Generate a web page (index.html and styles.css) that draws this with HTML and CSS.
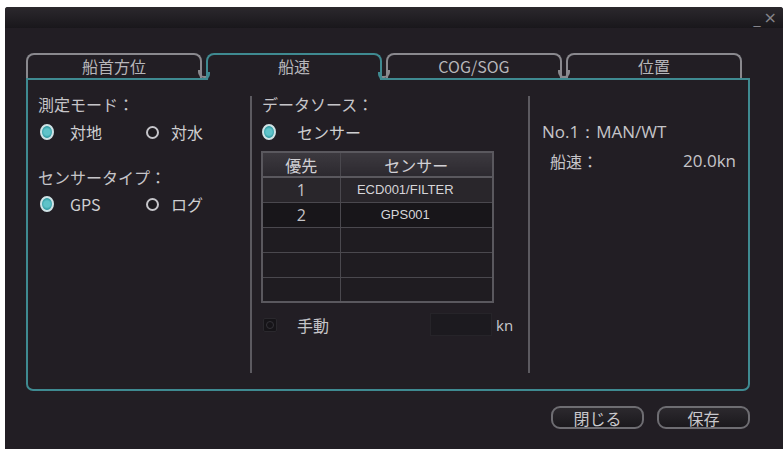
FILE: index.html
```html
<!DOCTYPE html>
<html lang="ja">
<head>
<meta charset="utf-8">
<title>船速</title>
<link rel="stylesheet" href="styles.css">
</head>
<body>
<div class="window">
  <div class="titlebar"><span class="ctl min">_</span><span class="ctl close">×</span></div>
  <div class="main">
    <div class="tabs">
      <div class="tab">船首方位</div>
      <div class="tab active">船速</div>
      <div class="tab">COG/SOG</div>
      <div class="tab">位置</div>
    </div>
    <div class="panel">
      <div class="col col-mode">
        <div class="label">測定モード：</div>
        <div class="radios">
          <div class="radio on"><span class="dot"></span><span>対地</span></div>
          <div class="radio"><span class="dot"></span><span>対水</span></div>
        </div>
        <div class="label second">センサータイプ：</div>
        <div class="radios">
          <div class="radio on"><span class="dot"></span><span>GPS</span></div>
          <div class="radio"><span class="dot"></span><span>ログ</span></div>
        </div>
      </div>
      <div class="col col-source">
        <div class="label">データソース：</div>
        <div class="radios">
          <div class="radio on wide"><span class="dot"></span><span>センサー</span></div>
        </div>
        <table class="grid">
          <thead>
            <tr><th class="c1">優先</th><th>センサー</th></tr>
          </thead>
          <tbody>
            <tr class="r1"><td class="c1 num">1</td><td class="name">ECD001/FILTER</td></tr>
            <tr class="r2"><td class="c1 num">2</td><td class="name">GPS001</td></tr>
            <tr><td class="c1"></td><td></td></tr>
            <tr><td class="c1"></td><td></td></tr>
            <tr><td class="c1"></td><td></td></tr>
          </tbody>
        </table>
        <div class="manual">
          <span class="check"></span>
          <span class="manual-label">手動</span>
          <span class="input"></span>
          <span class="unit">kn</span>
        </div>
      </div>
      <div class="col col-info">
        <div class="info-title">No.1：MAN/WT</div>
        <div class="info-row"><span>船速：</span><span class="val">20.0kn</span></div>
      </div>
    </div>
    <div class="buttons">
      <div class="btn">閉じる</div>
      <div class="btn">保存</div>
    </div>
  </div>
</div>
</body>
</html>
```

FILE: styles.css
```css
* { box-sizing: border-box; }
html, body { margin: 0; background: #ffffff; }
body {
  font-family: "Noto Sans CJK JP", "Open Sans", sans-serif;
  color: #cfcfd1;
}
.window {
  margin: 7px 0 0 5px;
  width: 778px;
  height: 442px;
  background: #221e24;
  border-radius: 3px 3px 0 0;
}
.titlebar {
  height: 21px;
  border-radius: 3px 3px 0 0;
  background: linear-gradient(#2b282d, #19171b);
  display: flex;
  justify-content: flex-end;
  align-items: center;
  padding-right: 6px;
  gap: 3px;
  color: #85848a;
  font-family: "DejaVu Sans", sans-serif;
}
.ctl.min { font-size: 14px; line-height: 14px; padding-top: 3px; }
.ctl.close { font-size: 16px; line-height: 17px; }
.main { padding: 25px 0 0 21px; }

.tabs {
  display: flex;
  gap: 4px;
  height: 25px;
  align-items: flex-start;
  position: relative;
  z-index: 1;
}
.tab {
  position: relative;
  width: 176px;
  height: 25px;
  border: 2px solid #8a898e;
  border-bottom: none;
  border-radius: 8px 8px 0 0;
  padding-bottom: 2px;
  display: flex;
  align-items: center;
  justify-content: center;
  font-size: 16px;
  line-height: 16px;
  color: #b7b6ba;
}
.tab::before,
.tab::after {
  content: "";
  position: absolute;
  bottom: 0;
  width: 6px;
  height: 6px;
  border-bottom: 2px solid #8a898e;
}
.tab::before {
  left: -6px;
  border-right: 2px solid #8a898e;
  border-bottom-right-radius: 6px;
}
.tab::after {
  right: -6px;
  border-left: 2px solid #8a898e;
  border-bottom-left-radius: 6px;
}
.tab:first-child::before,
.tab:last-child::after { display: none; }
.tab.active {
  border-color: #3f8a91;
  height: 27px;
  padding-bottom: 4px;
  background: #221e24;
  z-index: 2;
}
.tab.active::before,
.tab.active::after { border-color: #3f8a91; }

.panel {
  width: 724px;
  height: 313px;
  border: 2px solid #3f8a91;
  border-radius: 0 0 7px 7px;
  padding: 16px 0 16px 0;
  display: grid;
  grid-template-columns: 222px 278px 1fr;
}
.col { height: 100%; }
.col-mode { padding-left: 10px; }
.col-source { border-left: 2px solid #5c5a60; padding-left: 10px; }
.col-info { border-left: 2px solid #5c5a60; padding-left: 12px; padding-right: 12px; }

.label { font-size: 16px; line-height: 16px; color: #c6c5c9; }
.radios { display: flex; margin-top: 12px; height: 16px; }
.col-mode .label.second { margin-top: 29px; }
.col-mode .label.second + .radios { margin-top: 11px; }
.radio {
  display: flex;
  align-items: center;
  gap: 16px;
  font-size: 16px;
  line-height: 16px;
  width: 120px;
}
.col-mode .radio:first-child { margin-left: 2px; }
.radio + .radio { gap: 12px; }
.radio.wide { gap: 21px; width: auto; }
.dot {
  width: 14px;
  height: 14px;
  display: flex;
  align-items: center;
  justify-content: center;
}
.dot::before {
  content: "";
  width: 9px;
  height: 9px;
  border-radius: 50%;
  border: 2px solid #c6c5ca;
  background: #1d1a1f;
}
.radio.on .dot::before {
  width: 12px;
  height: 12px;
  border: 2px solid #cfe3e6;
  background: radial-gradient(circle, #5fc3c9 0 40%, #2e9aa2 70%);
}

.grid {
  margin: 11px 0 0 -1px;
  width: 233px;
  border-collapse: collapse;
  border: 2px solid #5a585e;
  font-size: 16px;
}
.grid th, .grid td {
  border: 1px solid #4a484e;
  height: 25px;
  padding: 0;
  text-align: center;
  line-height: 16px;
}
.grid th {
  background: linear-gradient(#3c393f, #2c292f);
  font-weight: normal;
  color: #d2d1d5;
  border-bottom: 2px solid #5a585e;
}
.grid .c1 { width: 78px; }
.grid tbody tr td { background-color: #1f1c21; }
.grid tbody tr.r1 td { background-color: #29262b; }
.grid tbody tr.r2 td { background-color: #18161a; }
.grid .num { font-family: "Open Sans", sans-serif; font-size: 16px; color: #c4c3c7; }
.grid .name {
  font-family: "Liberation Sans", sans-serif;
  font-size: 13px;
  color: #d6d5d9;
  padding-right: 22px;
}

.manual {
  display: grid;
  grid-template-columns: 35px 133px 62px auto;
  align-items: center;
  margin-top: 10px;
  height: 23px;
  font-size: 16px;
}
.check {
  width: 14px;
  height: 14px;
  margin-left: 1px;
  background: #161418;
  border: 1px solid #2a282d;
  border-radius: 2px;
  display: flex;
  align-items: center;
  justify-content: center;
}
.check::before {
  content: "";
  width: 6px;
  height: 6px;
  border-radius: 50%;
  border: 1px solid #343238;
}
.manual-label { color: #c6c5c9; line-height: 16px; }
.input {
  height: 23px;
  background: #1c1a1f;
  border: 1px solid #262429;
}
.unit { padding-left: 4px; color: #c9c8cc; font-family: "Open Sans", sans-serif; font-size: 15px; }

.info-title {
  margin-top: 28px;
  font-family: "Open Sans", sans-serif;
  font-size: 17px;
  line-height: 16px;
  color: #c6c5c9;
}
.info-row {
  margin-top: 13px;
  padding-left: 8px;
  display: flex;
  justify-content: space-between;
  font-size: 16px;
  line-height: 16px;
  color: #c6c5c9;
}
.info-row .val { font-family: "Open Sans", sans-serif; font-size: 17px; }

.buttons {
  width: 724px;
  display: flex;
  justify-content: flex-end;
  gap: 13px;
  padding-top: 15px;
}
.btn {
  width: 93px;
  height: 23px;
  border: 2px solid #6e6d72;
  border-radius: 9px;
  background: linear-gradient(#2c292e, #1b191d);
  display: flex;
  align-items: center;
  justify-content: center;
  font-size: 16px;
  line-height: 16px;
  color: #c9c8cc;
}
```
